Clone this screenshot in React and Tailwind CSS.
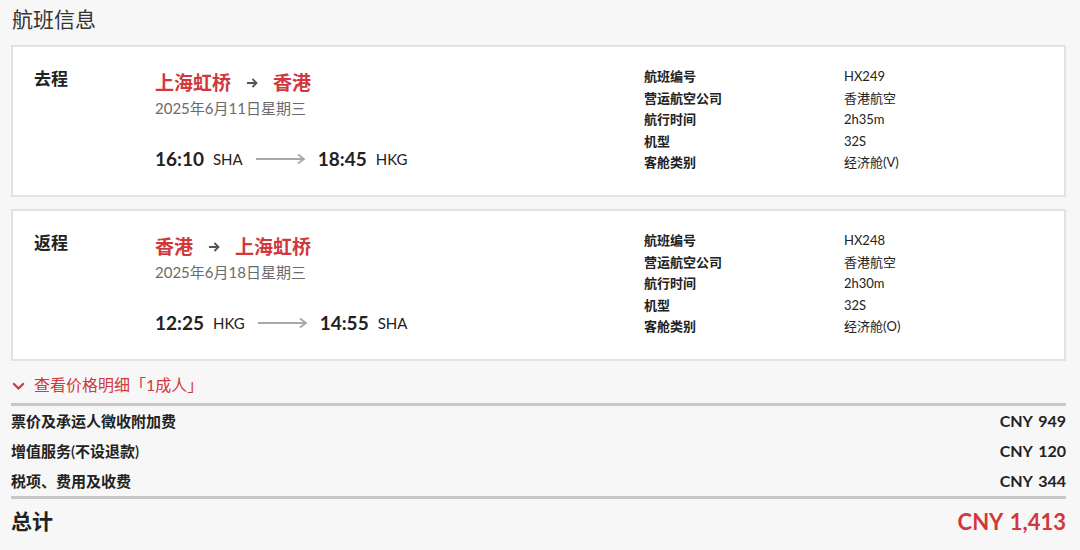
const flights = [
  {
    label: "去程",
    from: "上海虹桥",
    to: "香港",
    date: "2025年6月11日星期三",
    dep: "16:10",
    depCode: "SHA",
    arr: "18:45",
    arrCode: "HKG",
    details: [
      ["航班编号", "HX249"],
      ["营运航空公司", "香港航空"],
      ["航行时间", "2h35m"],
      ["机型", "32S"],
      ["客舱类别", "经济舱(V)"],
    ],
  },
  {
    label: "返程",
    from: "香港",
    to: "上海虹桥",
    date: "2025年6月18日星期三",
    dep: "12:25",
    depCode: "HKG",
    arr: "14:55",
    arrCode: "SHA",
    details: [
      ["航班编号", "HX248"],
      ["营运航空公司", "香港航空"],
      ["航行时间", "2h30m"],
      ["机型", "32S"],
      ["客舱类别", "经济舱(O)"],
    ],
  },
];

const prices = [
  ["票价及承运人徵收附加费", "CNY 949"],
  ["增值服务(不设退款)", "CNY 120"],
  ["税项、费用及收费", "CNY 344"],
];

function LongArrow() {
  return (
    <svg width="52" height="12" viewBox="0 0 52 12" className="shrink-0">
      <path d="M1 6H49M43 1.5L49 6L43 10.5" fill="none" stroke="#a8a8a8" strokeWidth="1.8" />
    </svg>
  );
}

function SmallArrow() {
  return (
    <svg width="12" height="10" viewBox="0 0 12 10" className="shrink-0">
      <path d="M1 5H10.5M6.5 1L10.5 5L6.5 9" fill="none" stroke="#555" strokeWidth="1.8" />
    </svg>
  );
}

function FlightCard({ f }) {
  return (
    <div className="bg-white border-2 border-[#e2e2e2] h-[152px] flex">
      <div className="w-[142px] shrink-0 pl-[21px] pt-[20px] text-[17px] font-bold text-[#222] leading-[24px]">
        {f.label}
      </div>
      <div className="w-[489px] shrink-0 pt-[23px]">
        <div className="flex items-center text-[19px] font-bold text-[#d0383b] leading-[26px]">
          <span>{f.from}</span>
          <span className="mx-[15px]"><SmallArrow /></span>
          <span>{f.to}</span>
        </div>
        <div className="text-[15px] text-[#6b6b6b] leading-[20px] mt-[2px]">{f.date}</div>
        <div className="flex items-center mt-[29px] text-[#222] leading-[24px]">
          <span className="text-[19px] font-bold">{f.dep}</span>
          <span className="text-[15px] ml-[9px]">{f.depCode}</span>
          <span className="ml-[12px] mr-[11px]"><LongArrow /></span>
          <span className="text-[19px] font-bold">{f.arr}</span>
          <span className="text-[15px] ml-[9px]">{f.arrCode}</span>
        </div>
      </div>
      <div className="pt-[19px] text-[13px] leading-[21.5px] text-[#222]">
        {f.details.map(([k, v]) => (
          <div key={k} className="flex">
            <span className="w-[200px] font-semibold">{k}</span>
            <span>{v}</span>
          </div>
        ))}
      </div>
    </div>
  );
}

export default function App() {
  return (
    <div
      className="bg-[#f7f7f7] min-h-[550px] pl-[11px] pr-[14px] pt-[5px]"
      style={{ fontFamily: 'Lato, "Noto Sans CJK SC", sans-serif' }}
    >
      <div className="text-[21px] text-[#333] leading-[28px] pl-[1px]">航班信息</div>
      <div className="mt-[12px] flex flex-col gap-[12px]">
        {flights.map((f) => (
          <FlightCard key={f.label} f={f} />
        ))}
      </div>

      <div className="mt-[12px] flex items-center text-[16px] text-[#d0383b] leading-[24px]">
        <svg width="13" height="8" viewBox="0 0 13 8" className="ml-[1px] mr-[9px] mt-[2px]">
          <path d="M1.2 1.2L6.5 6.5L11.8 1.2" fill="none" stroke="#d0383b" strokeWidth="2.2" />
        </svg>
        <span>查看价格明细「1成人」</span>
      </div>
      <div className="mt-[6px] h-[3px] bg-[#c8c8c8]" />
      <div>
        {prices.map(([k, v]) => (
          <div key={k} className="flex justify-between items-center h-[30px] text-[15px] font-semibold text-[#222]">
            <span>{k}</span>
            <span className="font-bold text-[16px] [word-spacing:2px]">{v}</span>
          </div>
        ))}
      </div>
      <div className="h-[3px] bg-[#c8c8c8]" />
      <div className="flex justify-between items-center h-[44px] font-bold">
        <span className="text-[21px] text-[#222]">总计</span>
        <span className="text-[22px] text-[#d0383b] [word-spacing:2px]">CNY 1,413</span>
      </div>
    </div>
  );
}
